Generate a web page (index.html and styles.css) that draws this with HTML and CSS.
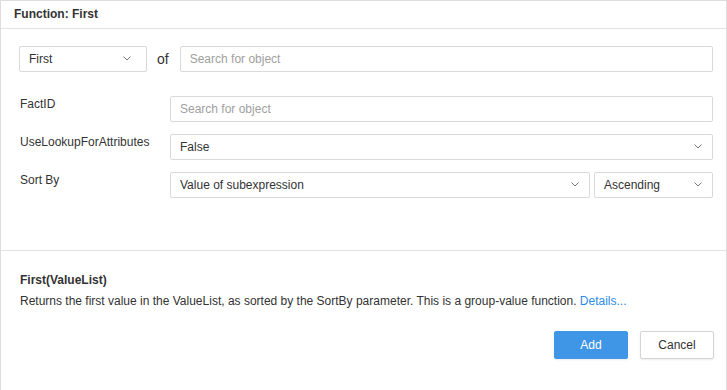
FILE: index.html
```html
<!DOCTYPE html>
<html lang="en">
<head>
  <meta charset="UTF-8" />
  <title>Function: First</title>
  <link rel="stylesheet" href="styles.css">
</head>
<body>
  <div class="dialog">
    <div class="dialog-header">Function: First</div>

    <div class="dialog-form">
      <div class="top-row">
        <div class="select select-func">
          <span>First</span>
          <svg class="chevron" width="8" height="5" viewBox="0 0 8 5"><path d="M0.5 0.5 L4 4 L7.5 0.5" fill="none" stroke="#777" stroke-width="1"/></svg>
        </div>
        <span class="of">of</span>
        <input class="field" type="text" placeholder="Search for object" />
      </div>

      <div class="form-row">
        <label class="form-label">FactID</label>
        <input class="field" type="text" placeholder="Search for object" />
      </div>

      <div class="form-row">
        <label class="form-label">UseLookupForAttributes</label>
        <div class="select">
          <span>False</span>
          <svg class="chevron" width="8" height="5" viewBox="0 0 8 5"><path d="M0.5 0.5 L4 4 L7.5 0.5" fill="none" stroke="#777" stroke-width="1"/></svg>
        </div>
      </div>

      <div class="form-row">
        <label class="form-label">Sort By</label>
        <div class="select">
          <span>Value of subexpression</span>
          <svg class="chevron" width="8" height="5" viewBox="0 0 8 5"><path d="M0.5 0.5 L4 4 L7.5 0.5" fill="none" stroke="#777" stroke-width="1"/></svg>
        </div>
        <div class="select select-order">
          <span>Ascending</span>
          <svg class="chevron" width="8" height="5" viewBox="0 0 8 5"><path d="M0.5 0.5 L4 4 L7.5 0.5" fill="none" stroke="#777" stroke-width="1"/></svg>
        </div>
      </div>
    </div>

    <div class="dialog-info">
      <div class="signature">First(ValueList)</div>
      <p class="description">Returns the first value in the ValueList, as sorted by the SortBy parameter. This is a group-value function. <a href="#">Details...</a></p>
      <div class="actions">
        <button class="btn btn-primary">Add</button>
        <button class="btn">Cancel</button>
      </div>
    </div>
  </div>
</body>
</html>
```

FILE: styles.css
```css
body {
  margin: 0;
  font-family: 'Liberation Sans', Arial, sans-serif;
  font-size: 12px;
  color: #333;
  background: #fff;
}
.dialog {
  height: 390px;
  box-sizing: border-box;
  border: 1px solid #ddd;
  border-bottom: none;
}
.dialog-header {
  height: 27px;
  line-height: 26px;
  padding-left: 13px;
  font-weight: bold;
  border-bottom: 1px solid #e2e2e2;
}
.dialog-form {
  height: 221px;
  box-sizing: border-box;
  padding: 17px 13px 0 18px;
}
.top-row {
  display: flex;
  align-items: center;
  margin-bottom: 24px;
}
.of {
  font-size: 14px;
  margin: 0 11px 0 10px;
}
.form-row {
  display: flex;
  align-items: flex-start;
  gap: 4px;
  margin-bottom: 12px;
}
.form-label {
  width: 146px;
  padding-left: 1px;
  line-height: 16px;
}
.field,
.select {
  flex: 1;
  height: 26px;
  box-sizing: border-box;
  border: 1px solid #d9d9d9;
  border-radius: 2px;
  padding: 0 9px;
  font-family: inherit;
  font-size: 12px;
  color: #333;
  background: #fff;
}
.field::placeholder {
  color: #a0a0a0;
}
.select {
  display: flex;
  align-items: center;
  justify-content: space-between;
  padding-right: 10px;
}
.select-func {
  flex: none;
  width: 128px;
  padding-right: 15px;
}
.select-order {
  flex: none;
  width: 119px;
}
.chevron {
  margin-top: -2px;
}
.dialog-info {
  border-top: 1px solid #e2e2e2;
  padding: 21px 12px 0 19px;
}
.signature {
  font-weight: bold;
  line-height: 16px;
}
.description {
  margin: 5px 0 0;
  line-height: 16px;
}
.description a {
  color: #2b8ce8;
  text-decoration: none;
}
.actions {
  display: flex;
  justify-content: flex-end;
  gap: 12px;
  margin-top: 22px;
}
.btn {
  width: 74px;
  height: 28px;
  border: 1px solid #d4d4d4;
  border-radius: 2px;
  background: #fff;
  font-family: inherit;
  font-size: 12px;
  color: #333;
  box-shadow: 0 1px 2px rgba(0, 0, 0, 0.08);
  cursor: pointer;
}
.btn-primary {
  background: #4096e6;
  border-color: #4096e6;
  color: #fff;
}
```
